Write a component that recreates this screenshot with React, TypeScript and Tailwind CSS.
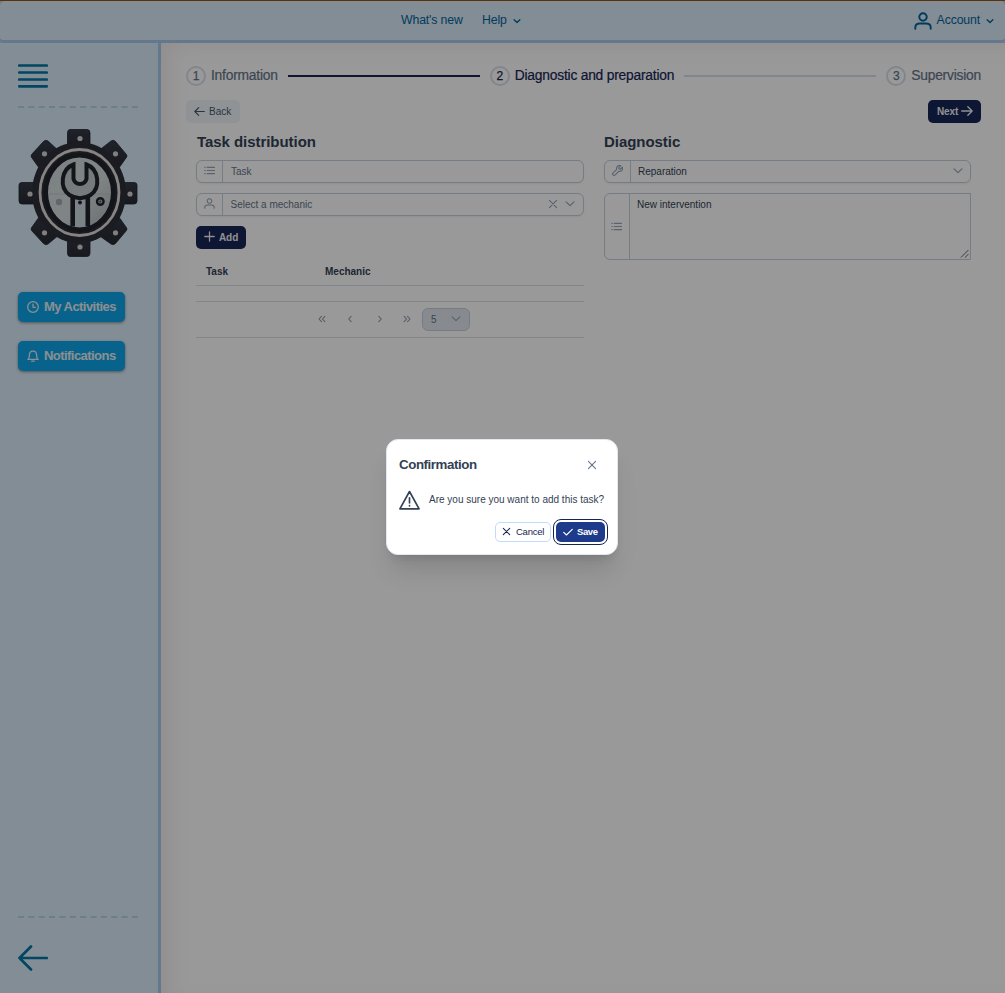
import React from "react";

type IconProps = { className?: string; d: string; box?: number; sw?: number };

function Icon({ className = "", d, box = 14, sw = 1 }: IconProps) {
  return (
    <svg
      viewBox={`0 0 ${box} ${box}`}
      className={`shrink-0 ${className}`}
      fill="none"
      stroke="currentColor"
      strokeWidth={sw}
      strokeLinecap="round"
      strokeLinejoin="round"
    >
      <path d={d} />
    </svg>
  );
}

const paths = {
  down: "M3 5.2 L7 9 L11 5.2",
  chevron: "M1.5 4 L7 9.4 L12.5 4",
  close: "M2 2 L12 12 M12 2 L2 12",
  list: "M4 3 H13.5 M4 7 H13.5 M4 11 H13.5 M1 3 H1.6 M1 7 H1.6 M1 11 H1.6",
  user: "M7 1 a2.9 2.9 0 1 1 0 5.8 a2.9 2.9 0 1 1 0 -5.8 M1 13 V12 C1 10 2.6 9 4.6 9 H9.4 C11.4 9 13 10 13 12 V13",
  left: "M13.2 7 H1.2 M6 2 L1 7 L6 12",
  right: "M0.8 7 H12.8 M8 2 L13 7 L8 12",
  plus: "M7 1 V13 M1 7 H13",
  clock: "M7 0.8 a6.2 6.2 0 1 1 0 12.4 a6.2 6.2 0 1 1 0 -12.4 M7 3.6 V7.4 H9.8",
  bell: "M1 11 C2.6 10 2.8 8.4 2.8 6 C2.8 3 4.4 1.2 7 1.2 C9.6 1.2 11.2 3 11.2 6 C11.2 8.4 11.4 10 13 11 Z M5.5 13 H8.5",
  wrench:
    "M11.2 0.9 A3.9 3.9 0 0 0 5.9 5.5 L1.2 10.2 A1.85 1.85 0 0 0 3.8 12.8 L8.5 8.1 A3.9 3.9 0 0 0 13.1 2.8 L10.6 5.2 L8.8 4.9 L8.7 3.3 Z",
  check: "M1 7.6 L4.8 11.2 L13 3.2",
  warn: "M7 1 L13.4 12.6 H0.6 Z M7 5.2 V8.6 M7 10.4 V10.6",
  first: "M6.2 3.4 L2.8 7 L6.2 10.6 M11 3.4 L7.6 7 L11 10.6",
  prev: "M8.6 3.4 L5.2 7 L8.6 10.6",
  next: "M5.4 3.4 L8.8 7 L5.4 10.6",
  last: "M3 3.4 L6.4 7 L3 10.6 M7.8 3.4 L11.2 7 L7.8 10.6",
};

function GearLogo() {
  return (
    <svg viewBox="0 0 120 130" className="h-[130px] w-[120px] shrink-0">
      <defs>
        <linearGradient id="face" x1="0" y1="0" x2="1" y2="1">
          <stop offset="0" stopColor="#cdd9dc" />
          <stop offset="0.55" stopColor="#d6dddd" />
          <stop offset="1" stopColor="#aeb6ba" />
        </linearGradient>
        <linearGradient id="metal" x1="0" y1="0" x2="0" y2="1">
          <stop offset="0" stopColor="#353945" />
          <stop offset="1" stopColor="#272a33" />
        </linearGradient>
      </defs>
      <g fill="url(#metal)" stroke="#22252e" strokeWidth="0.8" strokeLinejoin="round">
        <path d="M52 1.500 H69 Q72 1.500 72 5 V22 H49.500 V5 Q49.500 1.500 52 1.500 Z" />
        <path d="M52 128.500 H69 Q72 128.500 72 125 V108 H49.500 V125 Q49.500 128.500 52 128.500 Z" />
        <path d="M4 54.500 Q1 54.500 1 57 V73 Q1 76 4 76 L20 76 V54.500 Z" />
        <path d="M116 54.500 Q119 54.500 119 57 V73 Q119 76 116 76 L100 76 V54.500 Z" />
        <path d="M30 13 Q27.500 11.500 25.500 13.500 L14 26 Q12 28 14 30 L24 44 L42 24 Z" />
        <path d="M93 13 Q95.500 11.500 97.500 13.500 L108 26 Q110 28 108 30 L98 44 L79 24 Z" />
        <path d="M30 116 Q27.500 117.500 25.500 115.500 L14 103 Q12 101 14 99 L24 85 L42 106 Z" />
        <path d="M93 116 Q95.500 117.500 97.500 115.500 L108 103 Q110 101 108 99 L98 85 L79 106 Z" />
      </g>
      <ellipse cx="61" cy="64.500" rx="47" ry="50.500" fill="#2c303a" />
      <ellipse cx="61.500" cy="64.500" rx="39.500" ry="43" fill="#2a2d37" stroke="#e0ddd9" strokeWidth="2.800" />
      <ellipse cx="61.500" cy="64.500" rx="33.800" ry="37.200" fill="url(#face)" stroke="#20232c" strokeWidth="4.600" />
      <path d="M31 66 H52 M75 66 H93" stroke="#bac4c8" strokeWidth="0.8" />
      <path d="M55 70 V98 Q62 100 70 98 V70 Z" fill="#cfdbe0" />
      <path d="M54.700 68 V98.500 M69.800 68 V98.500" stroke="#20232c" strokeWidth="4.600" />
      <path
        d="M55.500 36.500 C43 41 41 60 51.500 67 Q62 73.500 72.500 67 C83 60 81 41 68.500 36.500 V51 Q67 56 62 56 Q57 56 55.500 51 Z"
        fill="#c3cbcd"
        stroke="#20232c"
        strokeWidth="4"
        strokeLinejoin="miter"
      />
      <circle cx="62" cy="74.500" r="2" fill="#20232c" />
      <circle cx="82.300" cy="73.500" r="3.300" fill="#aeb6ba" stroke="#20232c" strokeWidth="2.400" />
      <circle cx="82.300" cy="73.500" r="0.9" fill="#3a3f4c" />
      <circle cx="41" cy="74" r="3.200" fill="#a3a9b2" />
      <g fill="#d4d4d2">
        <circle cx="62" cy="10.500" r="2.600" />
        <circle cx="62" cy="119" r="2.600" />
        <circle cx="12" cy="66" r="2.600" />
        <circle cx="112" cy="66" r="2.600" />
        <circle cx="26.500" cy="25.800" r="2.600" />
        <circle cx="97.500" cy="25.800" r="2.600" />
        <circle cx="26.500" cy="104.800" r="2.600" />
        <circle cx="97.500" cy="104.800" r="2.600" />
      </g>
    </svg>
  );
}

function Dashes() {
  return (
    <svg viewBox="0 0 120 2" className="h-[2px] w-[120px] shrink-0">
      <path d="M0 1 H120" stroke="#b0d4e6" strokeWidth="2" strokeDasharray="6 4.36" />
    </svg>
  );
}

function TopBar() {
  return (
    <header className="h-[43px] shrink-0 border-t border-[#9a5212] bg-[#c4ccd8]">
      <div className="flex h-[42px] items-center rounded-[5px] border-b-[3px] border-[#a6c8ea] bg-[#daebf9] text-[12.3px] tracking-[-0.15px] text-[#036499]">
        <span className="ml-[401px] w-[62px] whitespace-nowrap">What's new</span>
        <span className="ml-[19px] w-[27px]">Help</span>
        <Icon d={paths.down} className="ml-[3px] size-[10px]" sw={1.9} />
        <Icon d={paths.user} className="ml-auto size-[18px]" sw={1.5} />
        <span className="ml-[5px]">Account</span>
        <Icon d={paths.down} className="mr-[10px] ml-[5px] size-[10px]" sw={1.9} />
      </div>
    </header>
  );
}

function SideButton({ icon, label }: { icon: string; label: string }) {
  return (
    <button className="flex h-[30px] w-[107px] items-center gap-[5px] rounded-[5px] bg-[#0ea5e9] pl-[9px] text-[13px] font-bold tracking-[-0.55px] whitespace-nowrap text-[#e8eef2] shadow-[0_1px_3px_rgba(0,0,0,0.4)]">
      <Icon d={icon} className="size-[12px]" sw={1.5} />
      {label}
    </button>
  );
}

function Sidebar() {
  return (
    <aside className="flex w-[161px] shrink-0 flex-col border-r-[3px] border-[#a6c8ea] bg-[#daebf9] pl-[18px]">
      <svg viewBox="0 0 30 24" className="mt-[21px] h-[24px] w-[30px] shrink-0">
        <path d="M1.200 1.500 H28.800 M1.200 8.500 H28.800 M1.200 15.500 H28.800 M1.200 22.300 H28.800" stroke="#0376a3" strokeWidth="2.700" strokeLinecap="round" />
      </svg>
      <div className="mt-[18px] flex">
        <Dashes />
      </div>
      <div className="mt-[20px] flex">
        <GearLogo />
      </div>
      <div className="mt-[34px] flex flex-col gap-[19px]">
        <SideButton icon={paths.clock} label="My Activities" />
        <SideButton icon={paths.bell} label="Notifications" />
      </div>
      <div className="mt-auto flex">
        <Dashes />
      </div>
      <svg viewBox="0 0 30 26" className="mt-[27px] mb-[22px] h-[26px] w-[30px] shrink-0">
        <path d="M1.500 13 H28.800 M13 1.500 L1.500 13 L13 24.500" fill="none" stroke="#0376a3" strokeWidth="2.700" strokeLinecap="round" strokeLinejoin="round" />
      </svg>
    </aside>
  );
}

function Step({ n, label, active }: { n: string; label: string; active?: boolean }) {
  return (
    <div className={`flex items-center gap-[5px] ${active ? "text-[#172554]" : "text-[#64748b]"}`}>
      <span className="flex size-[20px] items-center justify-center rounded-full border-2 border-[#d8dfe9] text-[12px] [-webkit-text-stroke:0.25px_currentColor]">
        {n}
      </span>
      <span className="pt-[1px] text-[13.8px] tracking-[-0.21px] whitespace-nowrap [-webkit-text-stroke:0.2px_currentColor]">
        {label}
      </span>
    </div>
  );
}

function PageContent() {
  return (
    <main className="flex min-w-0 flex-1 flex-col bg-white pr-[24px] pl-[25px] shadow-[inset_14px_6px_24px_-8px_rgba(120,90,70,0.12)]">
      <div className="mt-[23px] flex h-[20px] items-center gap-[10px]">
        <Step n="1" label="Information" />
        <div className="h-[2px] flex-1 bg-[#172554]" />
        <Step n="2" label="Diagnostic and preparation" active />
        <div className="h-[2px] flex-1 bg-[#d8dfe9]" />
        <Step n="3" label="Supervision" />
      </div>

      <div className="mt-[14px] flex justify-between text-[10px]">
        <button className="flex h-[23px] w-[54px] items-center gap-[4px] rounded-[5px] bg-[#f1f5f9] pl-[8px] text-[#475569]">
          <Icon d={paths.left} className="mb-[1px] size-[11px]" sw={1.4} />
          Back
        </button>
        <button className="flex h-[23px] w-[53px] items-center gap-[3px] rounded-[5px] bg-[#172554] pl-[9px] font-bold tracking-[-0.1px] text-[#eef1f6]">
          Next
          <Icon d={paths.right} className="mb-[2px] size-[12px]" sw={1.6} />
        </button>
      </div>

      <div className="flex gap-[20px] pr-[10px] pl-[10px] text-[10px] text-[#334155]">
        <section className="w-[388px]">
          <h2 className="mt-[8px] flex h-[22px] items-center pl-px text-[15px] font-bold tracking-[-0.05px]">Task distribution</h2>
          <div className="mt-[7px] flex h-[23px] items-center rounded-[6px] border border-[#c4cfdd] text-[#64748b] shadow-[0_1px_2px_rgba(0,0,0,0.06)]">
            <span className="flex h-full w-[26px] items-center justify-center border-r border-[#c4cfdd] text-[#94a3b8]">
              <Icon d={paths.list} className="mb-[2px] size-[11px]" sw={1.4} />
            </span>
            <span className="pl-[8px]">Task</span>
          </div>
          <div className="mt-[10px] flex h-[23px] items-center rounded-[6px] border border-[#c4cfdd] text-[#64748b] shadow-[0_1px_2px_rgba(0,0,0,0.06)]">
            <span className="flex h-full w-[26px] items-center justify-center border-r border-[#c4cfdd] text-[#94a3b8]">
              <Icon d={paths.user} className="mb-[2px] size-[11px]" sw={1.4} />
            </span>
            <span className="flex-1 pl-[7.5px]">Select a mechanic</span>
            <Icon d={paths.close} className="mr-[7px] mb-[1px] size-[10px] text-[#94a3b8]" sw={1.6} />
            <Icon d={paths.chevron} className="mr-[8px] mb-[1px] size-[10px] text-[#94a3b8]" sw={1.6} />
          </div>
          <button className="mt-[10px] flex h-[23px] w-[50px] items-center gap-[4px] rounded-[5px] bg-[#172554] pl-[8px] font-bold tracking-[-0.1px] text-[#eef1f6]">
            <Icon d={paths.plus} className="mb-[2px] size-[11px]" sw={1.6} />
            Add
          </button>
          <div className="mt-[9px] flex h-[28px] items-center border-b border-[#dbe0e7] pl-[10px] font-bold">
            <span className="w-[119px]">Task</span>
            <span>Mechanic</span>
          </div>
          <div className="h-[16px] border-b border-[#dbe0e7]" />
          <div className="flex h-[36px] items-center border-b border-[#dbe0e7] pl-[121px] text-[#8c9bb1]">
            <Icon d={paths.first} className="mb-[1px] size-[10px]" sw={1.5} />
            <Icon d={paths.prev} className="mb-[1px] ml-[18px] size-[10px]" sw={1.5} />
            <Icon d={paths.next} className="mb-[1px] ml-[20px] size-[10px]" sw={1.5} />
            <Icon d={paths.last} className="mb-[1px] ml-[17px] size-[10px]" sw={1.5} />
            <div className="ml-[10px] flex h-[23px] w-[48px] items-center justify-between rounded-[6px] border border-[#c4cfdd] bg-[#e2e8f0] pr-[8px] pl-[8px] text-[#64748b]">
              5
              <Icon d={paths.chevron} className="mb-[1px] size-[10px] text-[#94a3b8]" sw={1.6} />
            </div>
          </div>
        </section>

        <section className="w-[367px]">
          <h2 className="mt-[8px] flex h-[22px] items-center text-[15px] font-bold tracking-[-0.05px]">Diagnostic</h2>
          <div className="mt-[7px] flex h-[23px] items-center rounded-[6px] border border-[#c4cfdd] shadow-[0_1px_2px_rgba(0,0,0,0.06)]">
            <span className="flex h-full w-[26px] items-center justify-center border-r border-[#c4cfdd] text-[#94a3b8]">
              <Icon d={paths.wrench} className="mb-[2px] size-[11px]" sw={1.4} />
            </span>
            <span className="flex-1 pl-[7px]">Reparation</span>
            <Icon d={paths.chevron} className="mr-[7px] mb-[1px] size-[10px] text-[#94a3b8]" sw={1.6} />
          </div>
          <div className="mt-[10px] flex h-[67px] rounded-l-[6px] border border-[#c4cfdd]">
            <span className="flex h-full w-[25px] items-center justify-center border-r border-[#c4cfdd] pr-px text-[#94a3b8]">
              <Icon d={paths.list} className="mb-[1px] size-[11px]" sw={1.4} />
            </span>
            <span className="flex-1 pt-[3px] pl-[7px] leading-[15px]">New intervention</span>
            <svg viewBox="0 0 10 10" className="mr-px mb-px size-[9px] self-end">
              <path d="M1 9.500 L9.500 1 M5.500 9.500 L9.500 5.500" stroke="#555" strokeWidth="1" />
            </svg>
          </div>
        </section>
      </div>
    </main>
  );
}

function ConfirmDialog() {
  return (
    <div
      role="dialog"
      className="absolute top-[439px] left-[386px] flex h-[116px] w-[232px] flex-col rounded-[12px] border border-[#e2e8f0] bg-white pr-[12px] pl-[12px] text-[#334155] shadow-[0_20px_25px_-5px_rgba(0,0,0,0.12),0_8px_10px_-6px_rgba(0,0,0,0.12)]"
    >
      <div className="mt-[15px] flex h-[20px] items-center justify-between">
        <h3 className="text-[13.3px] font-bold tracking-[-0.42px]">Confirmation</h3>
        <Icon d={paths.close} className="mr-[8px] size-[10px] text-[#64748b]" sw={1.5} />
      </div>
      <div className="mt-[14px] flex h-[22px] items-center">
        <Icon d={paths.warn} className="size-[21px]" sw={1.1} />
        <span className="mb-[1px] ml-[9px] text-[10px] whitespace-nowrap">Are you sure you want to add this task?</span>
      </div>
      <div className="mt-[11px] flex justify-end text-[9.5px]">
        <button className="flex h-[20px] w-[56px] items-center gap-[5px] rounded-[5px] border border-[#bfdbfe] pl-[6px] tracking-[-0.25px] text-[#172554]">
          <Icon d={paths.close} className="mb-[1px] size-[9px]" sw={1.6} />
          Cancel
        </button>
        <button className="ml-[5px] flex h-[20px] w-[49px] items-center gap-[4px] rounded-[5px] bg-[#1e3a8a] pl-[7px] font-bold tracking-[-0.4px] text-white outline outline-offset-2 outline-[#172554]">
          <Icon d={paths.check} className="mb-[1px] size-[10px]" sw={1.6} />
          Save
        </button>
      </div>
    </div>
  );
}

export default function App() {
  return (
    <div className="relative flex h-[993px] w-[1005px] flex-col overflow-hidden font-['Liberation_Sans',Arial,sans-serif]">
      <TopBar />
      <div className="flex min-h-0 flex-1">
        <Sidebar />
        <PageContent />
      </div>
      <div className="absolute inset-0 bg-black/40" />
      <ConfirmDialog />
    </div>
  );
}
